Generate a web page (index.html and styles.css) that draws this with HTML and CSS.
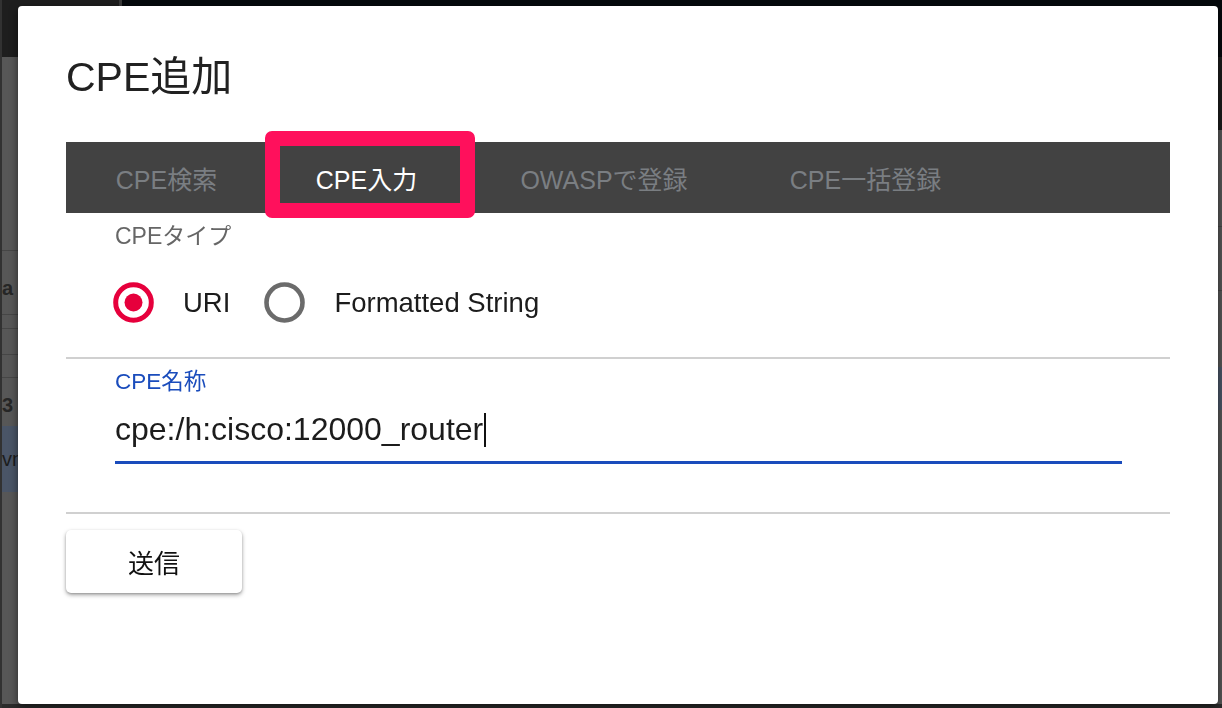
FILE: index.html
```html
<!DOCTYPE html>
<html lang="ja">
<head>
<meta charset="utf-8">
<title>CPE追加</title>
<link rel="stylesheet" href="styles.css">
</head>
<body>
<div class="page">
  <header class="topbar">
    <div class="brand"></div>
    <div class="topnav"></div>
  </header>
  <div class="main">
    <div class="leftpanel">
      <div class="row lr1"></div>
      <div class="row lr2"><span class="frag frag-a">a 3</span></div>
      <div class="row lr3"></div>
      <div class="row lr4"></div>
      <div class="row lr5"></div>
      <div class="lr6"><span class="frag frag-3">3</span></div>
      <div class="lr7"><span class="frag frag-vn">vn</span></div>
      <div class="lrest"></div>
    </div>
    <div class="rightpanel">
      <div class="rhead"></div>
      <div class="row rr1"></div>
      <div class="row rr2"></div>
      <div class="rr3"></div>
      <div class="rr4"></div>
      <div class="rrest"></div>
    </div>
  </div>
  <div class="footer"></div>
</div>

<div class="dialog" role="dialog">
  <h2 class="title">CPE追加</h2>

  <nav class="tabs">
    <div class="tab tab-search">CPE検索</div>
    <div class="tab tab-input active">CPE入力</div>
    <div class="tab tab-owasp">OWASPで登録</div>
    <div class="tab tab-bulk">CPE一括登録</div>
    <div class="highlight"></div>
  </nav>

  <div class="group">
    <div class="group-label">CPEタイプ</div>
    <div class="radios">
      <span class="radio">
        <svg width="41" height="41" viewBox="0 0 41 41"><circle cx="20.5" cy="20.5" r="17.8" fill="none" stroke="#e6003c" stroke-width="5"/><circle cx="20.5" cy="20.5" r="9" fill="#e6003c"/></svg>
      </span>
      <span class="radio-text">URI</span>
      <span class="radio radio-off">
        <svg width="41" height="41" viewBox="0 0 41 41"><circle cx="20.5" cy="20.5" r="18" fill="none" stroke="#6b6b6b" stroke-width="4.6"/></svg>
      </span>
      <span class="radio-text">Formatted String</span>
    </div>
  </div>

  <div class="divider divider-1"></div>

  <div class="field">
    <div class="field-label">CPE名称</div>
    <div class="input">cpe:/h:cisco:12000_router<span class="caret"></span></div>
  </div>

  <div class="divider divider-2"></div>

  <div class="actions">
    <button class="btn" type="button">送信</button>
  </div>
</div>
</body>
</html>
```

FILE: styles.css
```css
* { box-sizing: border-box; }

html, body {
  margin: 0;
  height: 100%;
}

body {
  font-family: "Liberation Sans", "Noto Sans CJK JP", sans-serif;
  background: #575757;
  overflow: hidden;
}

/* ---------- dimmed page behind the dialog ---------- */
.page {
  height: 708px;
  display: flex;
  flex-direction: column;
  border-left: 2px solid #323232;
}

.topbar {
  height: 57px;
  flex: none;
  display: flex;
}

.brand {
  width: 120px;
  background: #1e1e1e;
  border-right: 3px solid #3a3a3a;
}

.topnav {
  flex: 1;
  background: #05090c;
}

.main {
  flex: 1;
  display: flex;
  min-height: 0;
}

.leftpanel {
  width: 120px;
  display: flex;
  flex-direction: column;
  background: #575757;
}

.rightpanel {
  flex: 1;
  display: flex;
  flex-direction: column;
  background: #575757;
}

.row { border-bottom: 1px solid #464646; }

.lr1 { height: 194px; }
.lr2 { height: 64px; }
.lr3 { height: 14px; }
.lr4 { height: 26px; }
.lr5 { height: 23px; }
.lr6 { height: 48px; }
.lr7 { height: 66px; background: #4a5567; }
.lrest { flex: 1; }

.rhead { height: 73px; background: #1c1c1c; }
.rr1 { height: 97px; }
.rr2 { height: 64px; }
.rr3 { height: 76px; }
.rr4 { height: 43px; background: #4a5567; }
.rrest { flex: 1; }

.frag {
  display: block;
  font-size: 20px;
  font-weight: 700;
  color: #262626;
  white-space: nowrap;
}

.frag-a { margin-top: 26px; }
.frag-3 { margin-top: 16px; }
.frag-vn { margin-top: 22px; font-weight: 400; color: #1d1d1d; }

.footer {
  height: 4px;
  flex: none;
  background: #2b2b2b;
}

/* ---------- dialog ---------- */
.dialog {
  position: fixed;
  left: 18px;
  top: 6px;
  width: 1200px;
  height: 698px;
  background: #fff;
  border-radius: 4px;
  box-shadow: 0 3px 8px rgba(0, 0, 0, 0.55);
  padding: 47px 48px 0;
  display: flex;
  flex-direction: column;
}

.title {
  margin: 0;
  height: 48px;
  font-size: 41px;
  line-height: 48px;
  font-weight: 400;
  color: #212121;
}

/* tabs */
.tabs {
  position: relative;
  margin-top: 41px;
  height: 71px;
  flex: none;
  display: flex;
  background: #424242;
}

.tab {
  display: flex;
  align-items: center;
  justify-content: center;
  font-size: 25px;
  color: #7a7e82;
  white-space: nowrap;
}

.tab.active { color: #ffffff; }

.tab-search { width: 201px; }
.tab-input  { width: 199px; }
.tab-owasp  { width: 276px; }
.tab-bulk   { width: 247px; }

.highlight {
  position: absolute;
  left: 199px;
  top: -11px;
  width: 210px;
  height: 87px;
  border: 15px solid #ff105c;
  border-radius: 7px;
}

/* radio group */
.group {
  padding-left: 49px;
}

.group-label {
  margin-top: 9px;
  height: 28px;
  font-size: 23px;
  line-height: 28px;
  color: #666666;
}

.radios {
  margin-top: 32px;
  margin-left: -2px;
  height: 41px;
  display: flex;
  align-items: center;
}

.radio {
  display: flex;
  width: 41px;
  height: 41px;
}

.radio-off { margin-left: 34px; }

.radio-text {
  margin-left: 29px;
  font-size: 27.5px;
  color: #1c1c1c;
}

.divider {
  height: 2px;
  flex: none;
  background: #d0d0d0;
}

.divider-1 { margin-top: 34px; }
.divider-2 { margin-top: 48px; }

/* text field */
.field {
  padding: 0 48px 0 49px;
}

.field-label {
  margin-top: 9px;
  height: 28px;
  font-size: 22.5px;
  line-height: 28px;
  color: #1a4cbc;
}

.input {
  margin-top: 13px;
  font-size: 32px;
  line-height: 40px;
  color: #1c1c1c;
  padding-bottom: 12px;
  border-bottom: 3px solid #1a4cbc;
  white-space: nowrap;
}

.caret {
  display: inline-block;
  width: 2px;
  height: 34px;
  margin-left: 1px;
  background: #111;
  vertical-align: -7px;
}

/* actions */
.actions {
  margin-top: 16px;
}

.btn {
  width: 176px;
  height: 63px;
  border: 0;
  border-radius: 5px;
  background: #fff;
  font-family: "Liberation Sans", "Noto Sans CJK JP", sans-serif;
  font-size: 26px;
  color: #111;
  box-shadow: 0 2px 4px rgba(0, 0, 0, 0.35), 0 1px 2px rgba(0, 0, 0, 0.15);
  cursor: pointer;
}
```
